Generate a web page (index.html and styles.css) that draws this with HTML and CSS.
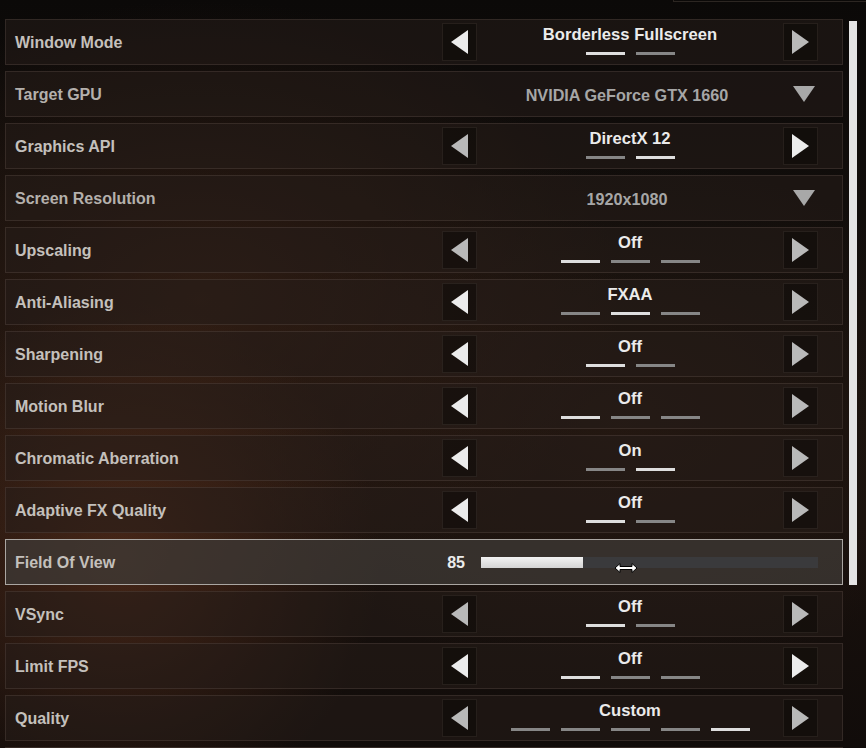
FILE: index.html
```html
<!DOCTYPE html>
<html>
<head>
<meta charset="utf-8">
<link rel="stylesheet" href="styles.css">
</head>
<body>
<div class="top-edge"></div>
<div class="layout">
  <div class="list">
    <div class="row">
      <div class="label">Window Mode</div>
      <div class="control">
        <div class="btn"><span class="tri-left bright"></span></div>
        <div class="middle"><div class="value">Borderless Fullscreen</div><div class="bars"><span class="bar on"></span><span class="bar"></span></div></div>
        <div class="btn"><span class="tri-right dim"></span></div>
      </div>
    </div>
    <div class="row">
      <div class="label dd-label">Target GPU</div>
      <div class="control">
        <div class="spacer"></div>
        <div class="middle dd"><div class="dd-value">NVIDIA GeForce GTX 1660</div></div>
        <div class="dd-cell"><span class="tri-down"></span></div>
      </div>
    </div>
    <div class="row">
      <div class="label">Graphics API</div>
      <div class="control">
        <div class="btn"><span class="tri-left dim"></span></div>
        <div class="middle"><div class="value">DirectX 12</div><div class="bars"><span class="bar"></span><span class="bar on"></span></div></div>
        <div class="btn"><span class="tri-right bright"></span></div>
      </div>
    </div>
    <div class="row">
      <div class="label dd-label">Screen Resolution</div>
      <div class="control">
        <div class="spacer"></div>
        <div class="middle dd"><div class="dd-value">1920x1080</div></div>
        <div class="dd-cell"><span class="tri-down"></span></div>
      </div>
    </div>
    <div class="row">
      <div class="label">Upscaling</div>
      <div class="control">
        <div class="btn"><span class="tri-left dim"></span></div>
        <div class="middle"><div class="value">Off</div><div class="bars"><span class="bar on"></span><span class="bar"></span><span class="bar"></span></div></div>
        <div class="btn"><span class="tri-right dim"></span></div>
      </div>
    </div>
    <div class="row">
      <div class="label">Anti-Aliasing</div>
      <div class="control">
        <div class="btn"><span class="tri-left bright"></span></div>
        <div class="middle"><div class="value">FXAA</div><div class="bars"><span class="bar"></span><span class="bar on"></span><span class="bar"></span></div></div>
        <div class="btn"><span class="tri-right dim"></span></div>
      </div>
    </div>
    <div class="row">
      <div class="label">Sharpening</div>
      <div class="control">
        <div class="btn"><span class="tri-left bright"></span></div>
        <div class="middle"><div class="value">Off</div><div class="bars"><span class="bar on"></span><span class="bar"></span></div></div>
        <div class="btn"><span class="tri-right dim"></span></div>
      </div>
    </div>
    <div class="row">
      <div class="label">Motion Blur</div>
      <div class="control">
        <div class="btn"><span class="tri-left bright"></span></div>
        <div class="middle"><div class="value">Off</div><div class="bars"><span class="bar on"></span><span class="bar"></span><span class="bar"></span></div></div>
        <div class="btn"><span class="tri-right dim"></span></div>
      </div>
    </div>
    <div class="row">
      <div class="label">Chromatic Aberration</div>
      <div class="control">
        <div class="btn"><span class="tri-left bright"></span></div>
        <div class="middle"><div class="value">On</div><div class="bars"><span class="bar"></span><span class="bar on"></span></div></div>
        <div class="btn"><span class="tri-right dim"></span></div>
      </div>
    </div>
    <div class="row">
      <div class="label">Adaptive FX Quality</div>
      <div class="control">
        <div class="btn"><span class="tri-left bright"></span></div>
        <div class="middle"><div class="value">Off</div><div class="bars"><span class="bar on"></span><span class="bar"></span></div></div>
        <div class="btn"><span class="tri-right dim"></span></div>
      </div>
    </div>
    <div class="row selected">
      <div class="label">Field Of View</div>
      <div class="control slider-control">
        <div class="num">85</div>
        <div class="track"><div class="fill" style="width:102px"></div></div>
      </div>
      <svg class="cursor" width="24" height="12" viewBox="0 0 24 12"><path d="M1 6 L6 1.5 L6 4.5 L18 4.5 L18 1.5 L23 6 L18 10.5 L18 7.5 L6 7.5 L6 10.5 Z" fill="#fff" stroke="#000" stroke-width="1"/></svg>
    </div>
    <div class="row">
      <div class="label">VSync</div>
      <div class="control">
        <div class="btn"><span class="tri-left dim"></span></div>
        <div class="middle"><div class="value">Off</div><div class="bars"><span class="bar on"></span><span class="bar"></span></div></div>
        <div class="btn"><span class="tri-right dim"></span></div>
      </div>
    </div>
    <div class="row">
      <div class="label">Limit FPS</div>
      <div class="control">
        <div class="btn"><span class="tri-left bright"></span></div>
        <div class="middle"><div class="value">Off</div><div class="bars"><span class="bar on"></span><span class="bar"></span><span class="bar"></span></div></div>
        <div class="btn"><span class="tri-right bright"></span></div>
      </div>
    </div>
    <div class="row">
      <div class="label">Quality</div>
      <div class="control">
        <div class="btn"><span class="tri-left dim"></span></div>
        <div class="middle"><div class="value">Custom</div><div class="bars"><span class="bar"></span><span class="bar"></span><span class="bar"></span><span class="bar"></span><span class="bar on"></span></div></div>
        <div class="btn"><span class="tri-right dim"></span></div>
      </div>
    </div>
    <div class="row">
      <div class="label"></div>
    </div>
  </div>
  <div class="scrollbar"></div>
</div>
</body>
</html>
```

FILE: styles.css
```css
html, body {
  margin: 0;
  padding: 0;
}
body {
  width: 866px;
  height: 748px;
  overflow: hidden;
  font-family: "Liberation Sans", Arial, sans-serif;
  font-weight: bold;
  background:
    radial-gradient(ellipse 260px 260px at 120px 560px, rgba(105, 55, 32, 0.55), rgba(105, 55, 32, 0) 100%),
    radial-gradient(ellipse 420px 300px at 200px 300px, rgba(80, 45, 28, 0.45), rgba(80, 45, 28, 0) 100%),
    radial-gradient(ellipse 380px 260px at 620px 420px, rgba(60, 38, 26, 0.35), rgba(60, 38, 26, 0) 100%),
    linear-gradient(180deg, #0b0908 0%, #140f0c 40%, #19110d 70%, #110c0a 100%);
}
.top-edge {
  margin-left: 673px;
  width: 200px;
  height: 1px;
  border-left: 1px solid #2c2622;
  border-bottom: 1px solid #2c2622;
}
.layout {
  display: flex;
  align-items: flex-start;
  gap: 6px;
  padding-left: 5px;
  margin-top: 17px;
}
.list {
  width: 838px;
  display: flex;
  flex-direction: column;
  gap: 6px;
}
.scrollbar {
  width: 8px;
  height: 564px;
  margin-top: 2px;
  background: #e4e4e4;
}
.row {
  position: relative;
  box-sizing: border-box;
  height: 46px;
  flex-shrink: 0;
  display: grid;
  grid-template-columns: 436px 376px;
  padding-right: 24px;
  border: 1px solid rgba(110, 95, 85, 0.28);
  background: rgba(38, 30, 26, 0.55);
}
.label {
  display: flex;
  align-items: center;
  padding-left: 9px;
  padding-top: 2px;
  font-size: 16px;
  color: #c4c0bc;
}
.dd-label {
  color: #b4b0ac;
}
.control {
  display: flex;
  align-items: center;
}
.btn {
  box-sizing: border-box;
  width: 35px;
  height: 38px;
  display: flex;
  align-items: center;
  justify-content: center;
  border: 1px solid rgba(110, 95, 85, 0.22);
  background: rgba(8, 6, 5, 0.45);
}
.spacer {
  width: 35px;
}
.middle {
  flex: 1;
  align-self: stretch;
  display: flex;
  flex-direction: column;
  align-items: center;
  padding-top: 5px;
}
.middle.dd {
  padding-top: 2px;
  padding-right: 6px;
  justify-content: center;
}
.value {
  font-size: 16.6px;
  line-height: 20px;
  color: #ebebeb;
}
.dd-value {
  font-size: 16.2px;
  line-height: 20px;
  color: #a6a6a6;
}
.bars {
  display: flex;
  gap: 11px;
  margin-top: 7px;
}
.bar {
  width: 39px;
  height: 3px;
  background: #868686;
}
.bar.on {
  background: #dedede;
}
.tri-left, .tri-right {
  width: 0;
  height: 0;
  border-top: 12px solid transparent;
  border-bottom: 12px solid transparent;
}
.tri-left {
  border-right: 17px solid #b9b9b9;
}
.tri-right {
  border-left: 17px solid #b9b9b9;
}
.tri-left.bright {
  border-right-color: #ececec;
}
.tri-right.bright {
  border-left-color: #ececec;
}
.dd-cell {
  box-sizing: border-box;
  width: 35px;
  display: flex;
  justify-content: flex-end;
  padding-right: 3px;
}
.tri-down {
  width: 0;
  height: 0;
  border-left: 11.5px solid transparent;
  border-right: 11.5px solid transparent;
  border-top: 16px solid #a8a8a8;
}
.row.selected {
  border-color: #aaa6a2;
  background: rgba(62, 56, 52, 0.78);
}
.slider-control {
  display: flex;
  align-items: center;
}
.num {
  width: 23px;
  text-align: right;
  font-size: 16px;
  padding-top: 2px;
  color: #ececec;
}
.track {
  flex: 1;
  height: 11px;
  margin-left: 16px;
  background: #3a3a3c;
}
.fill {
  height: 11px;
  background: linear-gradient(180deg, #f2f2f2, #d4d4d4);
}
.cursor {
  position: absolute;
  left: 608px;
  top: 22px;
}
```
